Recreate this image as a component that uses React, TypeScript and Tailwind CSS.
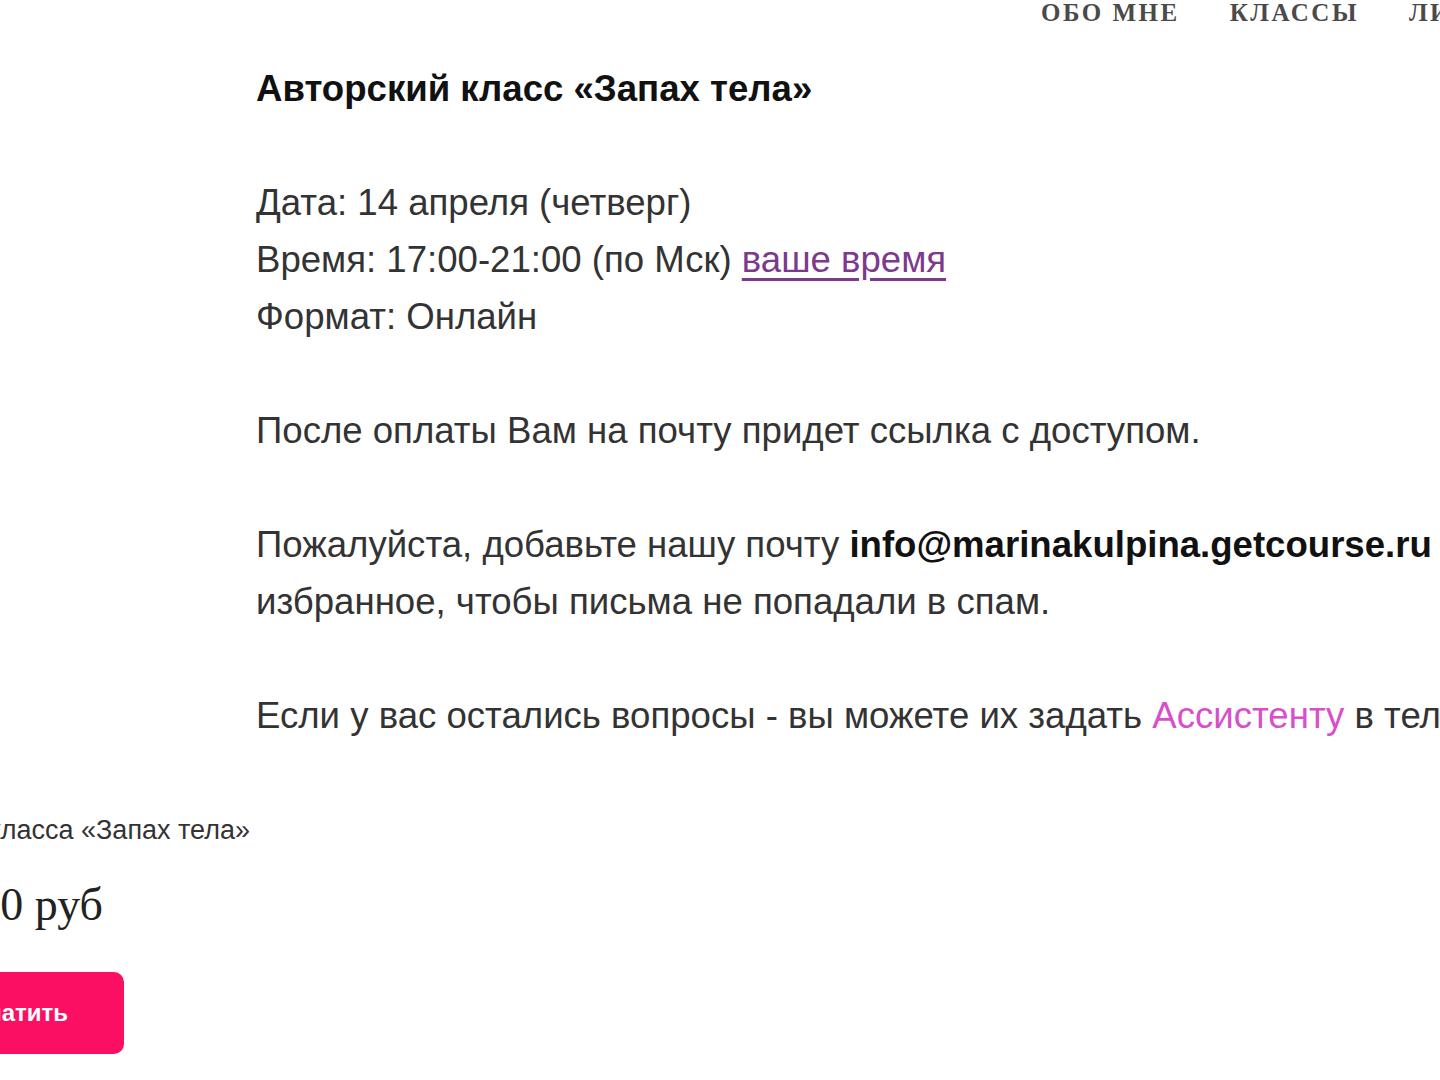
export default function App() {
  return (
    <div className="w-[1440px] h-[1080px] overflow-hidden bg-white font-['Liberation_Sans',Arial,sans-serif]">
      <header className="h-[60px] flex items-start gap-[50px] pl-[1041px] whitespace-nowrap font-['Liberation_Serif',Georgia,serif] font-bold text-[25px] leading-none tracking-[0.1em] text-[#4a4a4a]">
        <a>ОБО МНЕ</a>
        <a>КЛАССЫ</a>
        <a>ЛИЧНЫЙ КАБИНЕТ</a>
      </header>

      <main className="pl-[256px] w-[1800px] text-[36.6px] leading-[57px] text-[#333333] whitespace-nowrap">
        <p className="font-bold text-[#111111]">Авторский класс «Запах тела»</p>
        <br />
        <p>Дата: 14 апреля (четверг)</p>
        <p>
          Время: 17:00-21:00 (по Мск){" "}
          <a className="text-[#7b3a8c] underline underline-offset-[6px]">ваше время</a>
        </p>
        <p>Формат: Онлайн</p>
        <br />
        <p>После оплаты Вам на почту придет ссылка с доступом.</p>
        <br />
        <p>
          Пожалуйста, добавьте нашу почту{" "}
          <b className="text-[#111111]">info@marinakulpina.getcourse.ru</b> в
        </p>
        <p>избранное, чтобы письма не попадали в спам.</p>
        <br />
        <p>
          Если у вас остались вопросы - вы можете их задать{" "}
          <a className="text-[#d84fcb]">Ассистенту</a> в телеграм
        </p>
      </main>

      <section className="w-[250px] flex flex-col items-end whitespace-nowrap pt-[68px]">
        <p className="text-[27px] leading-[36px] text-[#333333]">Стоимость авторского класса «Запах тела»</p>
        <p className="mr-[147px] mt-[29px] font-['Liberation_Serif',Georgia,serif] text-[46px] leading-[56px] text-[#222222]">
          4900 руб
        </p>
        <button className="mr-[126px] mt-[39px] h-[82px] px-[56px] rounded-[10px] bg-[#fb0f63] text-white font-bold text-[24px]">
          Оплатить
        </button>
      </section>
    </div>
  );
}
